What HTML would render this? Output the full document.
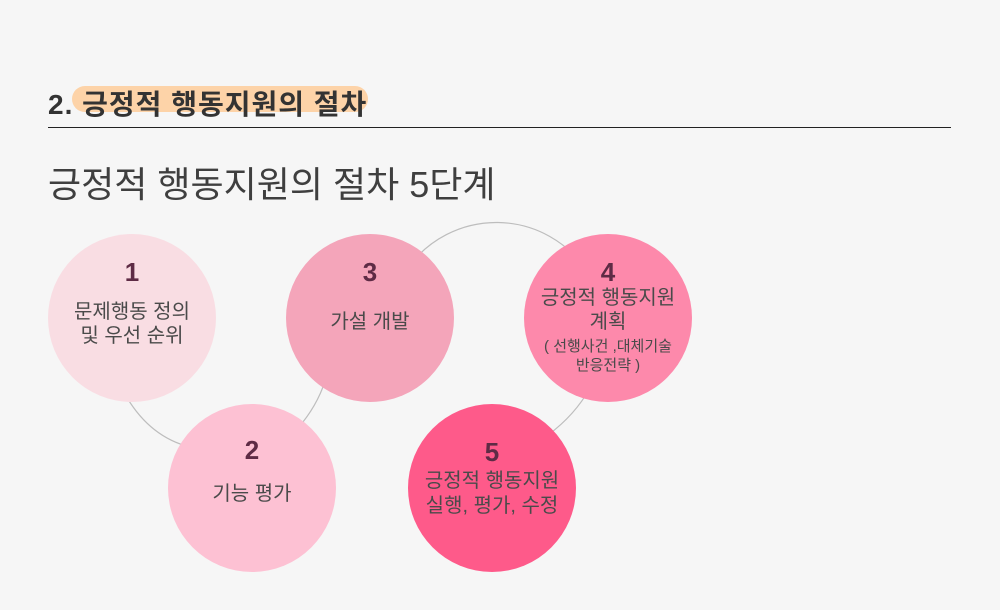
<!DOCTYPE html>
<html><head><meta charset="utf-8"><style>
body{margin:0;width:1000px;height:610px;background:#f6f6f6;font-family:"Liberation Sans","Noto Sans CJK KR",sans-serif;position:relative;overflow:hidden;color:#3f3f3f}
.h{position:absolute;left:48px;top:83px;font-size:28px;font-weight:bold;color:#333;letter-spacing:1px}
.hl{position:absolute;left:72px;top:86px;width:296px;height:26px;background:#fdd3a8;border-radius:13px}
.line{position:absolute;left:48px;top:127px;width:903px;height:1px;background:#222}
.t{position:absolute;left:48px;top:156px;font-size:36px;color:#3f3f3f}
.c{position:absolute;width:168px;height:168px;border-radius:50%;text-align:center;box-sizing:border-box;color:#4a4a4a;font-size:20px;line-height:24px}
.n{font-size:26px;font-weight:bold;color:#5e2b45;display:block;line-height:28px}
</style></head><body>
<div class="hl"></div>
<div class="h">2. 긍정적 행동지원의 절차</div>
<div class="line"></div>
<div class="t">긍정적 행동지원의 절차 5단계</div>
<svg width="1000" height="610" style="position:absolute;left:0;top:0">
<path d="M410 265 A109 109 0 0 1 585 268" fill="none" stroke="#bdbdbd" stroke-width="1.2"/>
<path d="M590 388 Q575 415 548 435" fill="none" stroke="#bdbdbd" stroke-width="1.2"/>
<path d="M126 396 Q150 437 190 447" fill="none" stroke="#bdbdbd" stroke-width="1.2"/>
<path d="M298 428 Q318 405 326 378" fill="none" stroke="#bdbdbd" stroke-width="1.2"/>
</svg>
<div class="c" style="left:48px;top:234px;background:#f9dde3;padding-top:24px"><span class="n" style="margin-bottom:14px">1</span>문제행동 정의<br>및 우선 순위</div>
<div class="c" style="left:168px;top:404px;background:#fdc1d3;padding-top:32px"><span class="n" style="margin-bottom:18px">2</span>기능 평가</div>
<div class="c" style="left:286px;top:234px;background:#f4a5ba;padding-top:24px"><span class="n" style="margin-bottom:24px">3</span>가설 개발</div>
<div class="c" style="left:524px;top:234px;background:#fd89ab;padding-top:24px;line-height:24px"><span class="n">4</span>긍정적 행동지원<br>계획<div style="font-size:15px;line-height:19px;margin-top:3px">( 선행사건 ,대체기술<br>반응전략 )</div></div>
<div class="c" style="left:408px;top:404px;background:#fe5a8a;padding-top:34px;line-height:25px"><span class="n" style="margin-bottom:3px">5</span>긍정적 행동지원<br>실행, 평가, 수정</div>
</body></html>
